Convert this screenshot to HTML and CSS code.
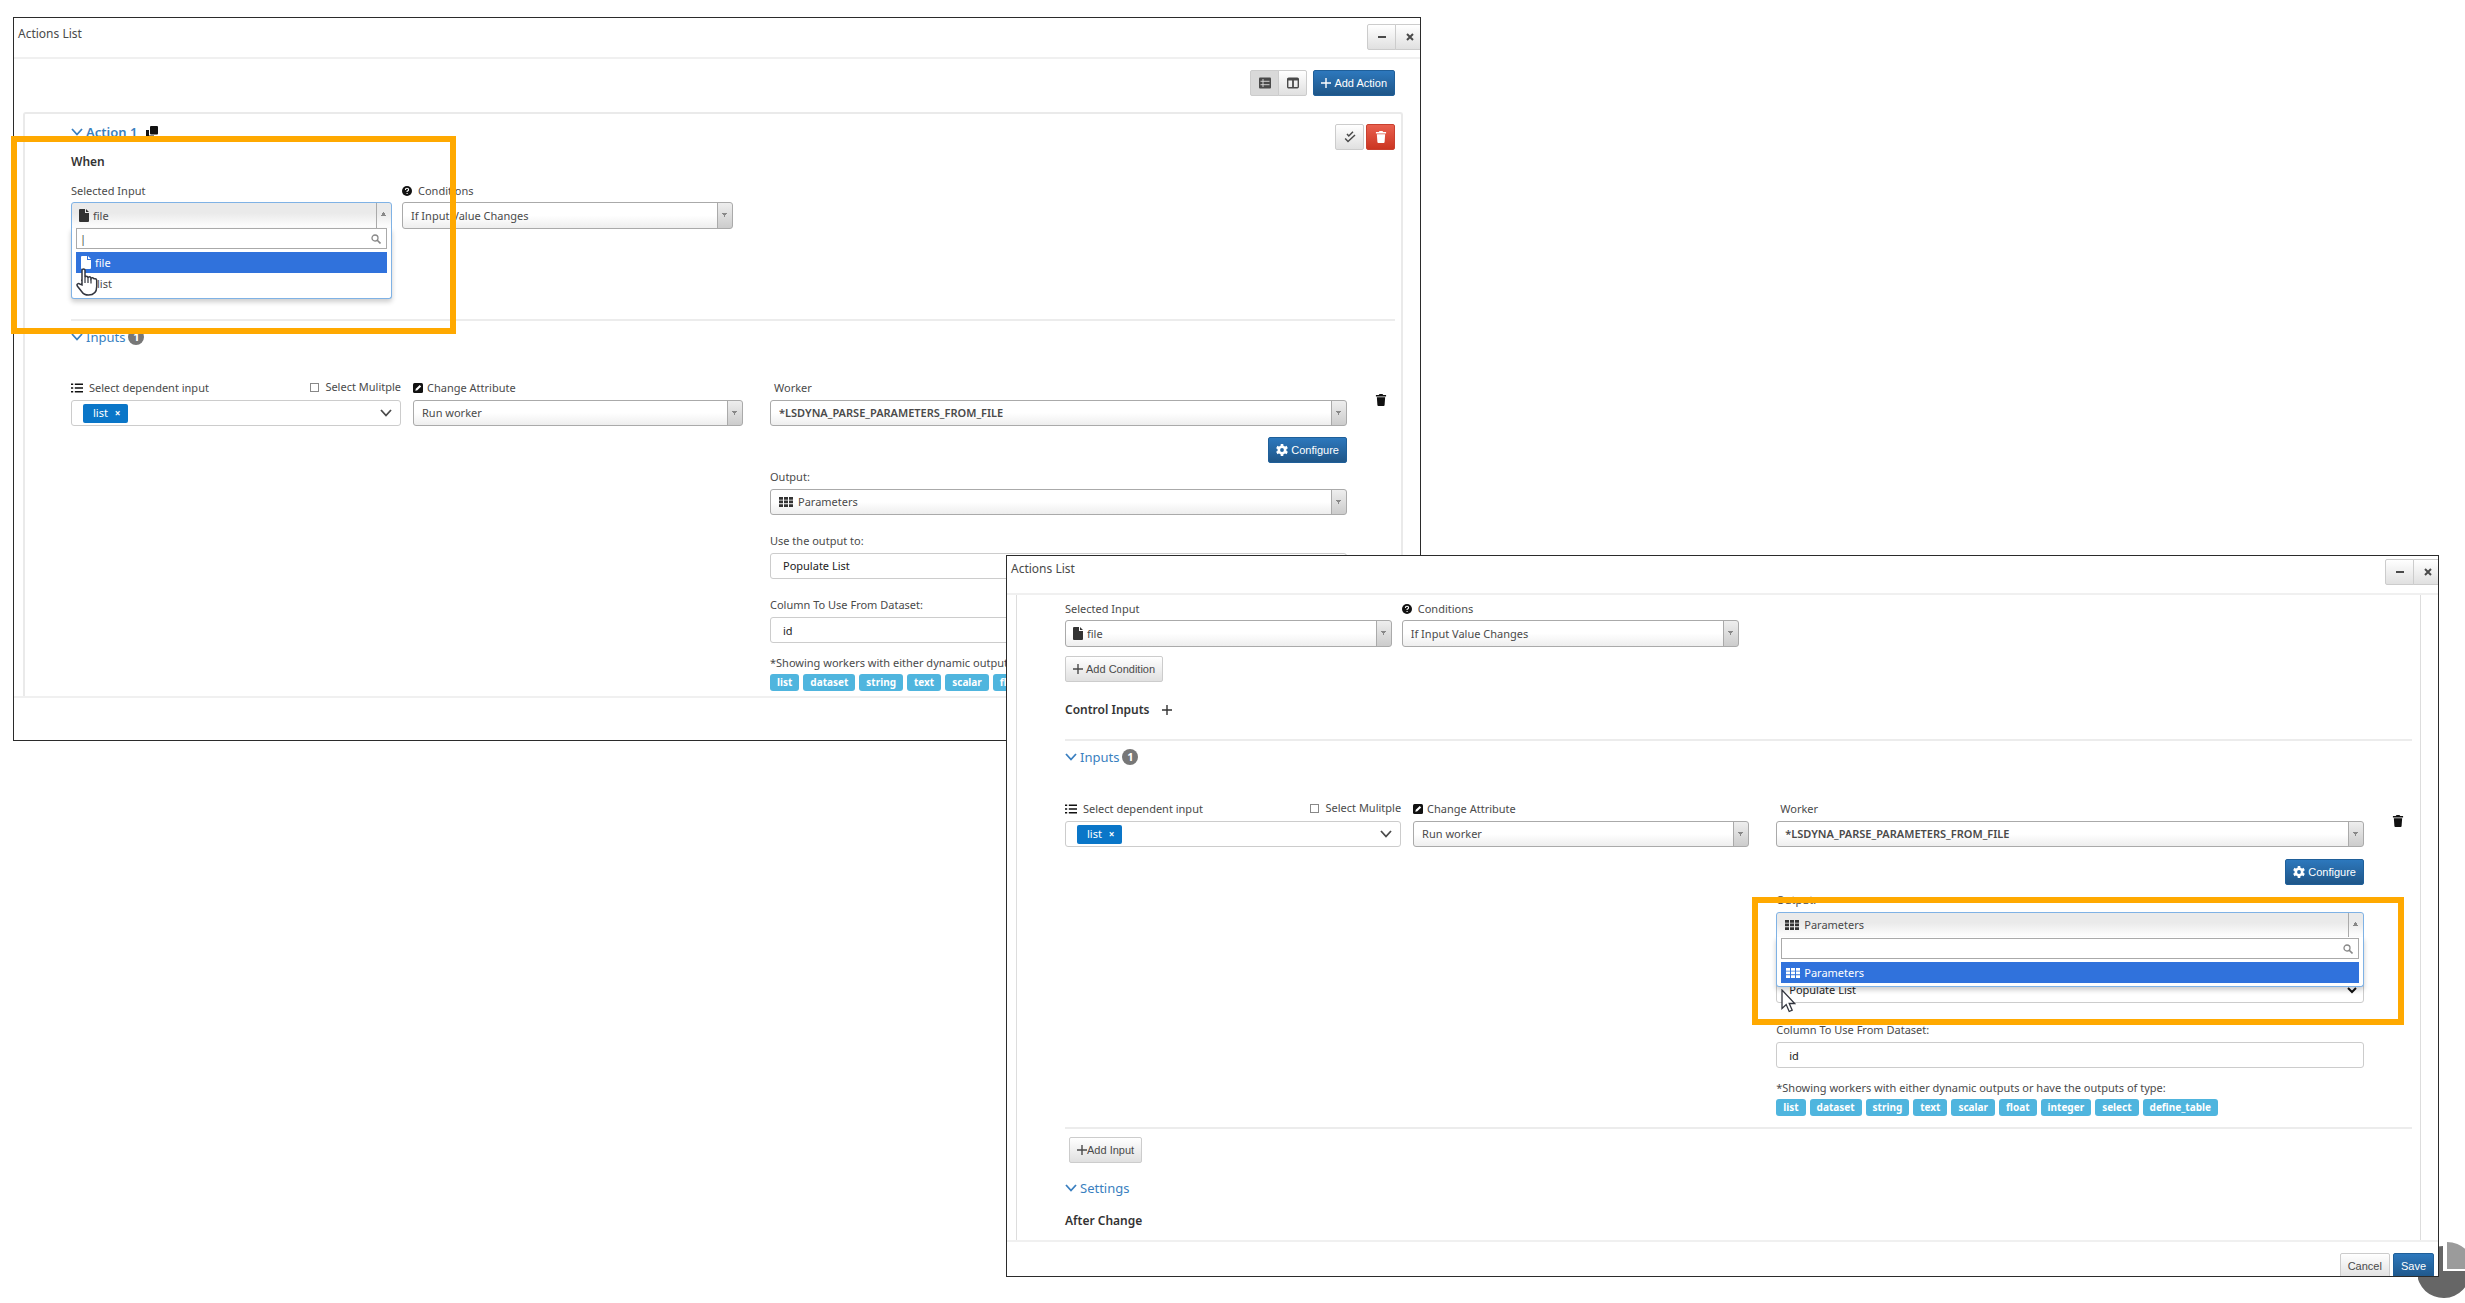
FILE: index.html
```html
<!DOCTYPE html>
<html lang="en">
<head>
<meta charset="utf-8">
<title>Actions List</title>
<link rel="stylesheet" href="styles.css">
</head>
<body>
<svg class="sprite" aria-hidden="true">
  <symbol id="i-chevron" viewBox="0 0 12 8"><path d="M1 1l5 5.500l5-5.500" fill="none" stroke="currentColor" stroke-width="1.800"/></symbol>
  <symbol id="i-plus" viewBox="0 0 10 10"><path d="M5 0v10M0 5h10" stroke="currentColor" stroke-width="1.400"/></symbol>
  <symbol id="i-file" viewBox="0 0 10 13"><path d="M1 0h5v4h4v8q0 1-1 1H1q-1 0-1-1V1q0-1 1-1zM7 0l3 3H7z" fill="currentColor"/></symbol>
  <symbol id="i-grid" viewBox="0 0 14 10"><path d="M0 0h4v2.700H0zM5 0h4v2.700H5zM10 0h4v2.700h-4zM0 3.600h4v2.700H0zM5 3.600h4v2.700H5zM10 3.600h4v2.700h-4zM0 7.200h4V10H0zM5 7.200h4V10H5zM10 7.200h4V10h-4z" fill="currentColor"/></symbol>
  <symbol id="i-trash" viewBox="0 0 11 13"><path d="M0 1.200h3L4 0h3l1 1.200h3V2.600H0zM1 3.500h9l-.6 8.500q-.1 1-1 1H2.600q-.9 0-1-1z" fill="currentColor"/></symbol>
  <symbol id="i-help" viewBox="0 0 10 10"><circle cx="5" cy="5" r="5" fill="currentColor"/><path d="M3.400 4q0-1.700 1.600-1.700T6.600 3.800q0 1-1.500 1.500v.7M5.100 7v1.100" fill="none" stroke="#fff" stroke-width="1.100"/></symbol>
  <symbol id="i-list" viewBox="0 0 11 10"><path d="M0 1.500h2M3.500 1.500H11M0 5h2M3.500 5H11M0 8.500h2M3.500 8.500H11" stroke="currentColor" stroke-width="1.300"/></symbol>
  <symbol id="i-edit" viewBox="0 0 10 10"><rect width="10" height="10" rx="1.500" fill="currentColor"/><path d="M2.300 7.700l.5-2L6.700 1.900l1.500 1.500L4.300 7.200z" fill="#fff"/></symbol>
  <symbol id="i-copy" viewBox="0 0 12 12"><rect x="4" y="0" width="8" height="8.500" rx="1" fill="currentColor"/><path d="M0 4h3v5.500h5V12H1q-1 0-1-1z" fill="currentColor"/></symbol>
  <symbol id="i-gear" viewBox="0 0 12 12"><circle cx="6" cy="6" r="3.200" fill="none" stroke="currentColor" stroke-width="2.600"/><path d="M6 0v3M6 9v3M.8 3l2.600 1.500M8.600 7.500L11.200 9M.8 9l2.600-1.500M8.600 4.500L11.200 3" stroke="currentColor" stroke-width="2.600"/></symbol>
  <symbol id="i-search" viewBox="0 0 10 10"><circle cx="4" cy="4" r="3" fill="none" stroke="currentColor" stroke-width="1.300"/><path d="M6 6l3.500 3.500" stroke="currentColor" stroke-width="1.600"/></symbol>
  <symbol id="i-rows" viewBox="0 0 12 11"><rect width="12" height="11" rx="1" fill="currentColor"/><path d="M4 1.500v8M1.500 3.800h9M1.500 7.200h9" stroke="#ddd" stroke-width=".9"/></symbol>
  <symbol id="i-cols" viewBox="0 0 12 11"><rect x=".7" y=".7" width="10.600" height="9.600" rx="1" fill="none" stroke="currentColor" stroke-width="1.400"/><path d="M0 2.200h12M6 2v8" stroke="currentColor" stroke-width="1.800"/></symbol>
  <symbol id="i-checks" viewBox="0 0 12 12"><path d="M3 3l1.800 2L9 .8M1.200 7.500L4 10.500 11 4" fill="none" stroke="currentColor" stroke-width="1.500"/></symbol>
</svg>

<main class="canvas">
  <svg class="pie" viewBox="0 0 47 58" aria-hidden="true">
    <path d="M25 4V29H52A26.500 26 0 1 1 25 4z" fill="#666"/>
    <path d="M29 0A27 27 0 0 1 56 27H29z" fill="#9b9b9b"/>
  </svg>

  <section class="window window-back" aria-label="Actions List">
    <header class="titlebar">
      <h1 class="title">Actions List</h1>
      <div class="group title-buttons">
        <button class="btn" type="button" aria-label="Minimize"><svg class="ico-10"><path d="M1 5h8" stroke="currentColor" stroke-width="2"/></svg></button>
        <button class="btn" type="button" aria-label="Close"><svg class="ico-10"><path d="M2 2l6 6M8 2L2 8" stroke="currentColor" stroke-width="2"/></svg></button>
      </div>
    </header>
    <div class="toolbar">
      <div class="group">
        <button class="btn pressed" type="button" aria-label="Row view"><svg class="ico-12"><use href="#i-rows"/></svg></button>
        <button class="btn" type="button" aria-label="Column view"><svg class="ico-12"><use href="#i-cols"/></svg></button>
      </div>
      <button class="btn primary add-action" type="button"><svg class="ico-10"><use href="#i-plus"/></svg><span>Add Action</span></button>
    </div>
    <div class="card">
      <div class="card-head">
        <h2 class="section-title strong"><svg class="ico-12"><use href="#i-chevron"/></svg>Action 1 <svg class="ico-12 copy"><use href="#i-copy"/></svg></h2>
        <div class="card-actions">
          <button class="btn" type="button" aria-label="Validate"><svg class="ico-12"><use href="#i-checks"/></svg></button>
          <button class="btn danger" type="button" aria-label="Delete action"><svg class="ico-12"><use href="#i-trash"/></svg></button>
        </div>
      </div>
      <h3 class="subhead when">When</h3>
      <div class="when-row">
        <div class="field">
          <label class="label" for="a-input">Selected Input</label>
          <div class="picker open">
            <svg class="lead file"><use href="#i-file"/></svg>
            <select class="select has-icon" id="a-input"><option>file</option></select>
            <div class="panel">
              <div class="search"><input type="text" aria-label="Search inputs" value="|"><svg class="ico-10"><use href="#i-search"/></svg></div>
              <ul class="options">
                <li class="option active"><svg class="file"><use href="#i-file"/></svg>file</li>
                <li class="option"><svg class="ico-12"><use href="#i-list"/></svg>list</li>
              </ul>
            </div>
          </div>
        </div>
        <div class="field">
          <label class="label" for="a-cond"><svg class="ico-10 dark"><use href="#i-help"/></svg>Conditions</label>
          <select class="select" id="a-cond"><option>If Input Value Changes</option></select>
        </div>
      </div>
      <hr class="rule">
      <h2 class="section-title"><svg class="ico-12"><use href="#i-chevron"/></svg>Inputs <span class="badge">1</span></h2>
      <div class="input-row">
        <div class="field">
          <div class="label-line">
            <span class="label"><svg class="ico-12 dark"><use href="#i-list"/></svg>Select dependent input</span>
            <label class="check"><input type="checkbox">Select Mulitple</label>
          </div>
          <div class="tokens"><button class="token" type="button">list <b>×</b></button><svg class="ico-12"><use href="#i-chevron"/></svg></div>
        </div>
        <div class="field">
          <label class="label tight" for="a-attr"><svg class="ico-10 dark"><use href="#i-edit"/></svg>Change Attribute</label>
          <select class="select" id="a-attr"><option>Run worker</option></select>
        </div>
        <div class="field worker">
          <label class="label inset" for="a-worker">Worker</label>
          <select class="select bold" id="a-worker"><option>*LSDYNA_PARSE_PARAMETERS_FROM_FILE</option></select>
          <button class="btn primary configure" type="button"><svg class="ico-12"><use href="#i-gear"/></svg><span>Configure</span></button>
          <label class="label" for="a-out">Output:</label>
          <div class="picker">
            <svg class="lead grid"><use href="#i-grid"/></svg>
            <select class="select has-grid" id="a-out"><option>Parameters</option></select>
          </div>
          <label class="label next" for="a-use">Use the output to:</label>
          <select class="select plain" id="a-use"><option>Populate List</option></select>
          <label class="label next" for="a-col">Column To Use From Dataset:</label>
          <input class="text" id="a-col" type="text" value="id">
          <p class="hint">*Showing workers with either dynamic outputs or</p>
          <div class="tags"><span>list</span><span>dataset</span><span>string</span><span>text</span><span>scalar</span><span>float</span></div>
        </div>
        <button class="remove" type="button" aria-label="Remove input"><svg class="ico-12"><use href="#i-trash"/></svg></button>
      </div>
    </div>
    <footer class="footer"></footer>
  </section>

  <section class="window window-front" aria-label="Actions List">
    <header class="titlebar">
      <h1 class="title">Actions List</h1>
      <div class="group title-buttons">
        <button class="btn" type="button" aria-label="Minimize"><svg class="ico-10"><path d="M1 5h8" stroke="currentColor" stroke-width="2"/></svg></button>
        <button class="btn" type="button" aria-label="Close"><svg class="ico-10"><path d="M2 2l6 6M8 2L2 8" stroke="currentColor" stroke-width="2"/></svg></button>
      </div>
    </header>
    <div class="card">
      <div class="when-row">
        <div class="field">
          <label class="label" for="b-input">Selected Input</label>
          <div class="picker">
            <svg class="lead file"><use href="#i-file"/></svg>
            <select class="select has-icon" id="b-input"><option>file</option></select>
          </div>
        </div>
        <div class="field">
          <label class="label" for="b-cond"><svg class="ico-10 dark"><use href="#i-help"/></svg>Conditions</label>
          <select class="select" id="b-cond"><option>If Input Value Changes</option></select>
        </div>
      </div>
      <button class="btn add-condition" type="button"><svg class="ico-10"><use href="#i-plus"/></svg><span>Add Condition</span></button>
      <h3 class="subhead control">Control Inputs <button class="bare" type="button" aria-label="Add control input"><svg class="ico-10"><use href="#i-plus"/></svg></button></h3>
      <hr class="rule">
      <h2 class="section-title"><svg class="ico-12"><use href="#i-chevron"/></svg>Inputs <span class="badge">1</span></h2>
      <div class="input-row">
        <div class="field">
          <div class="label-line">
            <span class="label"><svg class="ico-12 dark"><use href="#i-list"/></svg>Select dependent input</span>
            <label class="check"><input type="checkbox">Select Mulitple</label>
          </div>
          <div class="tokens"><button class="token" type="button">list <b>×</b></button><svg class="ico-12"><use href="#i-chevron"/></svg></div>
        </div>
        <div class="field">
          <label class="label tight" for="b-attr"><svg class="ico-10 dark"><use href="#i-edit"/></svg>Change Attribute</label>
          <select class="select" id="b-attr"><option>Run worker</option></select>
        </div>
        <div class="field worker">
          <label class="label inset" for="b-worker">Worker</label>
          <select class="select bold" id="b-worker"><option>*LSDYNA_PARSE_PARAMETERS_FROM_FILE</option></select>
          <button class="btn primary configure" type="button"><svg class="ico-12"><use href="#i-gear"/></svg><span>Configure</span></button>
          <label class="label" for="b-out">Output:</label>
          <div class="picker open">
            <svg class="lead grid"><use href="#i-grid"/></svg>
            <select class="select has-grid" id="b-out"><option>Parameters</option></select>
            <div class="panel">
              <div class="search"><input type="text" aria-label="Search outputs"><svg class="ico-10"><use href="#i-search"/></svg></div>
              <ul class="options">
                <li class="option active"><svg class="grid"><use href="#i-grid"/></svg>Parameters</li>
              </ul>
            </div>
          </div>
          <span class="label next"></span>
          <select class="select plain chevron" aria-label="Use the output to"><option>Populate List</option></select>
          <label class="label next" for="b-col">Column To Use From Dataset:</label>
          <input class="text" id="b-col" type="text" value="id">
          <p class="hint">*Showing workers with either dynamic outputs or have the outputs of type:</p>
          <div class="tags"><span>list</span><span>dataset</span><span>string</span><span>text</span><span>scalar</span><span>float</span><span>integer</span><span>select</span><span>define_table</span></div>
        </div>
        <button class="remove" type="button" aria-label="Remove input"><svg class="ico-12"><use href="#i-trash"/></svg></button>
      </div>
      <hr class="rule end">
      <button class="btn add-input" type="button"><svg class="ico-10"><use href="#i-plus"/></svg><span>Add Input</span></button>
      <h2 class="section-title settings"><svg class="ico-12"><use href="#i-chevron"/></svg>Settings</h2>
      <h3 class="subhead after">After Change</h3>
    </div>
    <footer class="footer">
      <button class="btn" type="button">Cancel</button>
      <button class="btn primary" type="button">Save</button>
    </footer>
  </section>

  <div class="callout callout-back"></div>
  <div class="callout callout-front"></div>
  <svg class="hand" viewBox="0 0 22 28" aria-hidden="true"><path d="M6 17V2.500q0-1.500 1.500-1.500T9 2.500V9.500q.3-1.200 1.500-1.200T12 9.800q.3-1 1.500-1T15 10.500q.4-.9 1.600-.8 1.300.2 1.300 1.600.3-.7 1.400-.6Q20.700 11 20.700 12.500v6q0 8.500-8.200 8.500-4.500 0-6.500-3L1.300 18q-.8-1.500.4-2.200 1.200-.6 2.300.4z" fill="#fff" stroke="#33363f" stroke-width="1.500"/><path d="M9 9.500V15M12 10v5M15 11v4.500" stroke="#33363f" stroke-width="1.200"/></svg>
  <svg class="arrow" viewBox="0 0 15 24" aria-hidden="true"><path d="M1 1v18.500l4.200-4 3 7 3-1.300-3-6.700h5.500z" fill="#fff" stroke="#33363f" stroke-width="1.300"/></svg>
</main>
</body>
</html>
```

FILE: styles.css
```css
* { box-sizing: border-box; }

body {
  margin: 0;
  background: #fff;
  color: #4a4a4a;
  font: 11px/16px "Noto Sans", sans-serif;
}

h1, h2, h3, p, ul { margin: 0; padding: 0; font-weight: 400; }

button, input, select { font: inherit; color: inherit; }

svg { display: block; flex: none; }

.sprite { position: absolute; width: 0; height: 0; }

.canvas { position: relative; min-height: 100vh; overflow: hidden; }

/* Windows */
.window {
  --title-top: 6px;
  --title-height: 41px;
  --stack: 18px;
  --config: 11px;
  --output: 6px;
  position: absolute;
  isolation: isolate;
  background: #fff;
  border: 1px solid #2b2b2b;
  overflow: hidden;
}
.window-back { left: 13px; right: 1044px; top: 17px; }
.window-front {
  --title-top: 3px;
  --title-height: 39px;
  --stack: 19px;
  --config: 12px;
  --output: 7px;
  left: 1006px;
  right: 26px;
  top: 555px;
}

.titlebar {
  display: flex;
  align-items: flex-start;
  justify-content: space-between;
  height: var(--title-height);
  padding: var(--title-top) 0 0 4px;
  border-bottom: 2px solid #f0f0f0;
}
.title { margin-top: 2px; font-size: 12px; }
.title-buttons { margin-right: -4px; }

.toolbar {
  display: flex;
  justify-content: flex-end;
  gap: 6px;
  padding: 11px 25px 16px;
}

.group { display: flex; }
.group .btn { width: 29px; }
.group .btn + .btn { margin-left: -1px; border-radius: 0 2px 2px 0; }
.group .btn:first-child { border-radius: 2px 0 0 2px; }

.btn {
  display: flex;
  align-items: center;
  justify-content: center;
  gap: 3px;
  height: 26px;
  padding: 0 7px;
  border: 1px solid #ccc;
  border-radius: 2px;
  background: linear-gradient(#fff, #e0e0e0);
  font-family: "Liberation Sans", sans-serif;
  white-space: nowrap;
}
.btn.pressed { background: #d9d9d9; }
.btn.primary {
  border-color: #1f5f99;
  background: linear-gradient(#2d78bd, #1f5688);
  color: #fff;
}
.btn.danger {
  border-color: #c9402f;
  background: linear-gradient(#e9604f, #cb3521);
  color: #fff;
}

.card {
  margin: 0 17px 0 9px;
  padding: 10px 6px 5px 46px;
  border: 2px solid #eaeaea;
  border-bottom: 0;
  border-radius: 3px 3px 0 0;
}
.window-front .card {
  padding: 6px 8px 11px 48px;
  border-width: 0 1px;
  border-color: #ddd;
  border-radius: 0;
}

.card-head { display: flex; justify-content: space-between; }
.card-actions { display: flex; gap: 2px; }
.card-actions .btn { width: 29px; }

.section-title {
  display: flex;
  align-items: center;
  gap: 3px;
  height: 16px;
  color: #3a7fc0;
  font-size: 13px;
}
.section-title.strong { font-weight: 600; }
.copy { margin-left: 6px; color: #111; }
.badge {
  width: 16px;
  height: 16px;
  border-radius: 8px;
  background: #777;
  color: #fff;
  font-size: 11px;
  font-weight: 700;
  text-align: center;
}

.subhead { display: flex; align-items: center; gap: 12px; height: 16px; color: #333; font-size: 12px; font-weight: 600; }
.when { margin: 4px 0 13px; }
.control { margin: 20px 0 21px; }
.settings { margin: 17px 0; }
.bare { padding: 0; border: 0; background: none; }

.rule { height: 2px; margin: 0 0 8px; border: 0; background: #ececec; }
.rule.end { margin-top: 11px; }
.window-back .rule { margin-top: 90px; }

/* Form rows */
.when-row { display: grid; grid-template-columns: calc(25% - 10px) 25%; gap: 10px; }
.input-row {
  display: grid;
  grid-template-columns: minmax(0, 330fr) minmax(0, 330fr) minmax(0, 580fr) 48px;
  align-items: start;
  column-gap: 12px;
  margin-top: 35px;
}
.window-front .input-row { margin-top: 36px; }
.input-row .worker { margin-right: -12px; padding-left: 15px; }

.field { display: flex; flex-direction: column; min-width: 0; }
.label { display: flex; align-items: center; gap: 6px; height: 16px; margin-bottom: 4px; white-space: nowrap; }
.when-row .label { margin-bottom: 3px; }
.label.tight { gap: 4px; }
.label.inset { margin-left: 4px; }
.label.next { margin-top: var(--stack); }
.dark { color: #111; }
.label-line { display: flex; justify-content: space-between; }
.check { display: flex; align-items: center; gap: 6px; height: 14px; white-space: nowrap; }
.check input {
  appearance: none;
  width: 9px;
  height: 9px;
  margin: 0;
  border: 1px solid #888;
  background: #fff;
}

.select {
  appearance: none;
  width: 100%;
  height: 26px;
  padding: 0 24px 0 8px;
  border: 1px solid #aaa;
  border-radius: 3px;
  outline: 0;
  background:
    linear-gradient(#888, #888) right 5px top 10px / 5px 1px no-repeat,
    linear-gradient(#888, #888) right 6px top 11px / 3px 1px no-repeat,
    linear-gradient(#888, #888) right 7px top 12px / 1px 2px no-repeat,
    linear-gradient(#aaa, #aaa) right 14px top 0 / 1px 100% no-repeat,
    linear-gradient(#eee, #ccc) right top / 14px 100% no-repeat,
    linear-gradient(#fff 50%, #eee);
}
.when-row .select { height: 27px; }
.select.bold { font-weight: 600; }
.select.has-icon { padding-left: 21px; }
.select.has-grid { padding-left: 27px; }
.select.plain, .text {
  width: 100%;
  height: 26px;
  padding: 0 12px;
  border: 1px solid #ccc;
  border-radius: 3px;
  background: #fff;
  color: #222;
}
.select.chevron {
  background: #fff url("data:image/svg+xml,%3Csvg xmlns='http://www.w3.org/2000/svg' viewBox='0 0 10 7'%3E%3Cpath d='M1 1l4 4 4-4' fill='none' stroke='%23111' stroke-width='2'/%3E%3C/svg%3E") right 6px center / 10px 7px no-repeat;
}

.picker { position: relative; }
.lead { position: absolute; left: 8px; top: 7px; color: #333; pointer-events: none; }
.file { width: 10px; height: 13px; }
.grid { width: 14px; height: 10px; }
.lead.grid { left: 9px; top: 8px; }

.picker.open .select {
  border-color: #7fb2e5;
  border-radius: 3px 3px 0 0;
  background:
    linear-gradient(#888, #888) right 7px top 9px / 1px 1px no-repeat,
    linear-gradient(#888, #888) right 6px top 10px / 3px 2px no-repeat,
    linear-gradient(#888, #888) right 5px top 12px / 5px 1px no-repeat,
    linear-gradient(#aaa, #aaa) right 14px top 0 / 1px 100% no-repeat,
    linear-gradient(#eaeaea 40%, #fff);
}
.panel {
  position: absolute;
  z-index: 1;
  inset: calc(100% - 1px) 0 auto;
  padding: 0 4px 4px;
  border: 1px solid #7fb2e5;
  border-top: 0;
  border-radius: 0 0 3px 3px;
  background: #fff;
  box-shadow: 0 3px 5px #0003;
}
.window-front .panel { padding: 1px 4px 3px; }
.search { display: flex; align-items: center; height: 21px; padding-right: 5px; border: 1px solid #aaa; }
.search input { flex: 1; min-width: 0; height: 19px; padding: 0 3px; border: 0; outline: 0; background: none; }
.search svg { color: #888; }
.options { margin-top: 3px; list-style: none; }
.option { display: flex; align-items: center; gap: 4px; height: 21px; padding-left: 5px; }
.option.active { background: #3072dc; color: #fff; }

.tokens {
  display: flex;
  align-items: center;
  justify-content: space-between;
  height: 26px;
  padding: 0 8px 0 11px;
  border: 1px solid #ccc;
  border-radius: 3px;
}
.token {
  height: 19px;
  padding: 0 7px 0 10px;
  border: 0;
  border-radius: 2px;
  background: #0a76c8;
  color: #fff;
}
.token b { margin-left: 4px; font-size: 10px; }

.configure { align-self: flex-end; margin: var(--config) 0 var(--output); }
.hint { margin-top: 12px; height: 16px; white-space: nowrap; }
.tags { display: flex; gap: 4px; margin-top: 3px; }
.tags span {
  height: 17px;
  padding: 0 7px;
  border-radius: 3px;
  background: #4fb5de;
  color: #fff;
  font-size: 10px;
  font-weight: 700;
}

.remove {
  justify-self: center;
  margin: 14px 0 0 19px;
  padding: 0;
  border: 0;
  background: none;
  color: #111;
}

.add-condition { margin-top: 9px; }
.add-input { margin-left: 4px; gap: 0; }

.footer {
  display: flex;
  justify-content: flex-end;
  align-items: flex-start;
  gap: 3px;
  min-height: 44px;
  border-top: 2px solid #f0f0f0;
}
.window-front .footer { min-height: 0; height: 36px; padding: 11px 4px 0; }

.ico-10 { width: 10px; height: 10px; }
.ico-12 { width: 12px; height: 12px; }

/* Marks drawn over the windows */
.callout { position: absolute; border: 6px solid #ffa900; pointer-events: none; }
.callout-back { left: 11px; top: 136px; width: 445px; height: 198px; }
.callout-front { left: 1752px; right: 61px; top: 897px; height: 128px; }
.hand { position: absolute; left: 76px; top: 268px; width: 22px; height: 28px; }
.arrow { position: absolute; left: 1781px; top: 989px; width: 15px; height: 24px; }
.pie { position: absolute; right: 0; top: 1242px; width: 47px; height: 58px; }
```
